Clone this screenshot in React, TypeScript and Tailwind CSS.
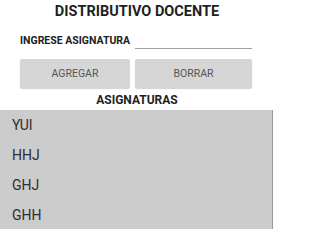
const asignaturas = ["YUI", "HHJ", "GHJ", "GHH"];

export default function App() {
  return (
    <div className="w-[274px] h-[232px] bg-white overflow-hidden font-['Roboto',sans-serif]">
      <h1 className="h-[25px] pt-[3px] text-center text-[14.5px] leading-[18px] font-bold text-[#1f1f1f]">
        DISTRIBUTIVO DOCENTE
      </h1>

      <div className="flex items-end h-[24px] pl-[20px] pr-[22px]">
        <span className="text-[10.5px] leading-[14px] font-bold text-[#212121] mb-[1px]">
          INGRESE ASIGNATURA
        </span>
        <div className="ml-[5px] flex-1 border-b border-[#a0a0a0] h-[14px]" />
      </div>

      <div className="flex gap-[5px] pl-[20px] pr-[22px] mt-[10px]">
        <button className="w-[110px] h-[29px] bg-[#d6d6d6] rounded-[2px] shadow-[0_1px_1px_rgba(0,0,0,0.18)] text-[10.5px] text-[#555555]">
          AGREGAR
        </button>
        <button className="flex-1 h-[29px] bg-[#d6d6d6] rounded-[2px] shadow-[0_1px_1px_rgba(0,0,0,0.18)] text-[10.5px] text-[#555555]">
          BORRAR
        </button>
      </div>

      <h2 className="h-[22px] pt-[4px] text-center text-[12px] leading-[16px] font-bold text-[#1f1f1f]">
        ASIGNATURAS
      </h2>

      <ul className="w-[273px] h-[119px] bg-[#cccccc] border-r border-[#999999]">
        {asignaturas.map((a) => (
          <li key={a} className="h-[30px] flex items-center pl-[12px] text-[14px] text-[#2e2e2e]">
            {a}
          </li>
        ))}
      </ul>
    </div>
  );
}
